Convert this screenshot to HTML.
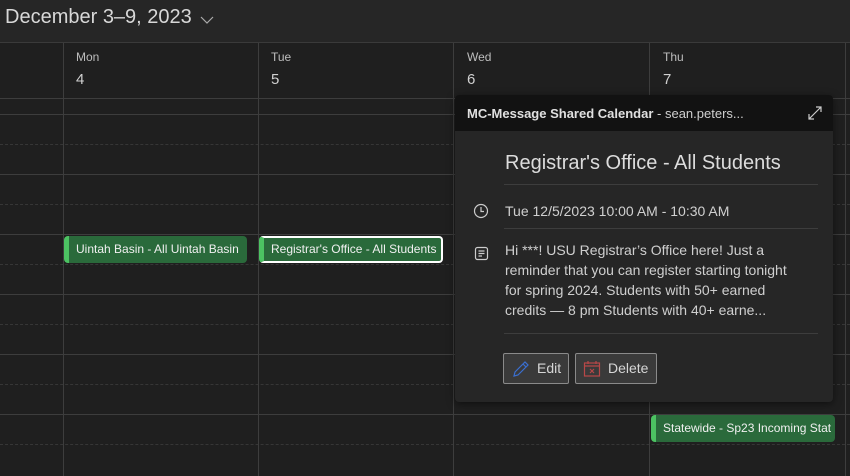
<!DOCTYPE html>
<html><head><style>
*{margin:0;padding:0;box-sizing:border-box}
body{width:850px;height:476px;overflow:hidden;background:#1f1f1f;font-family:"Segoe UI","Liberation Sans",sans-serif;color:#d6d6d6;position:relative}
.abs{position:absolute}
.top{left:0;top:0;width:850px;height:43px;background:#262626;border-bottom:1px solid #3a3a3a}
.vl{top:43px;bottom:0;width:1px;background:#3d3d3d}
.hl{left:0;width:850px;height:1px;background:#3d3d3d}
.dl{left:0;width:850px;height:0;border-top:1px dashed #363636}
.day{font-size:12px;color:#bdbdbd}
.num{font-size:15px;color:#d0d0d0}
.ev{height:27px;background:#2a6a3b;border-radius:4px;border-left:5px solid #4cc262;color:#f0f0f0;font-size:12px;line-height:27px;padding-left:7px;white-space:nowrap;overflow:hidden}
</style></head><body>
<div class="abs top"></div>
<div class="abs" style="left:5px;top:6px;font-size:20px;color:#d8d8d8">December 3–9, 2023</div>
<svg class="abs" style="left:200px;top:15px" width="14" height="10"><path d="M1 2 L7 8 L13 2" fill="none" stroke="#aaa" stroke-width="1.2"/></svg>
<div class="abs hl" style="top:98px"></div>
<div class="abs hl" style="top:114px"></div>
<div class="abs hl" style="top:174px"></div>
<div class="abs hl" style="top:234px"></div>
<div class="abs hl" style="top:294px"></div>
<div class="abs hl" style="top:354px"></div>
<div class="abs hl" style="top:414px"></div>
<div class="abs dl" style="top:144px"></div>
<div class="abs dl" style="top:204px"></div>
<div class="abs dl" style="top:264px"></div>
<div class="abs dl" style="top:324px"></div>
<div class="abs dl" style="top:384px"></div>
<div class="abs dl" style="top:444px"></div>
<div class="abs vl" style="left:63px"></div>
<div class="abs vl" style="left:258px"></div>
<div class="abs vl" style="left:453px"></div>
<div class="abs vl" style="left:649px"></div>
<div class="abs vl" style="left:845px"></div>
<div class="abs day" style="left:76px;top:50px">Mon</div><div class="abs num" style="left:76px;top:71px">4</div>
<div class="abs day" style="left:271px;top:50px">Tue</div><div class="abs num" style="left:271px;top:71px">5</div>
<div class="abs day" style="left:467px;top:50px">Wed</div><div class="abs num" style="left:467px;top:71px">6</div>
<div class="abs day" style="left:663px;top:50px">Thu</div><div class="abs num" style="left:663px;top:71px">7</div>
<div class="abs ev" style="left:64px;top:236px;width:183px">Uintah Basin - All Uintah Basin</div>
<div class="abs ev" style="left:259px;top:236px;width:184px;border:2px solid #fff;border-left:5px solid #4cc262;line-height:23px;padding-left:7px">Registrar's Office - All Students</div>
<div class="abs ev" style="left:651px;top:415px;width:184px">Statewide - Sp23 Incoming Stat</div>
<div class="abs" style="left:455px;top:95px;width:378px;height:307px;background:#262626;border-radius:4px;overflow:hidden;box-shadow:0 2px 8px rgba(0,0,0,.5)">
 <div style="height:36px;background:#121212;padding:11px 0 0 12px;font-size:13px;color:#e0e0e0"><b>MC-Message Shared Calendar</b> <span style="color:#cfcfcf">- sean.peters...</span></div>
 <svg class="abs" style="left:352px;top:10px" width="16" height="16"><path d="M2 14 L14 2 M9 2 H14 V7 M2 9 V14 H7" fill="none" stroke="#ccc" stroke-width="1.2"/></svg>
 <div class="abs" style="left:50px;top:57px;font-size:20px;color:#dcdcdc">Registrar's Office - All Students</div>
 <div class="abs" style="left:49px;top:89px;width:314px;height:1px;background:#3d3d3d"></div>
 <svg class="abs" style="left:18px;top:108px" width="16" height="16"><circle cx="8" cy="8" r="6.5" fill="none" stroke="#ccc" stroke-width="1.2"/><path d="M8 4 V8.5 H11" fill="none" stroke="#ccc" stroke-width="1.2"/></svg>
 <div class="abs" style="left:50px;top:108px;font-size:14px;color:#d0d0d0">Tue 12/5/2023 10:00 AM - 10:30 AM</div>
 <div class="abs" style="left:49px;top:133px;width:314px;height:1px;background:#3d3d3d"></div>
 <svg class="abs" style="left:19px;top:151px" width="16" height="16"><rect x="1.5" y="1.5" width="12" height="12" rx="2" fill="none" stroke="#ccc" stroke-width="1.2"/><path d="M4.5 5 H10.5 M4.5 7.5 H10.5 M4.5 10 H8" stroke="#ccc" stroke-width="1.2"/></svg>
 <div class="abs" style="left:50px;top:145px;width:300px;font-size:14px;line-height:20px;color:#cfcfcf">Hi ***! USU Registrar’s Office here! Just a reminder that you can register starting tonight for spring 2024. Students with 50+ earned credits — 8 pm Students with 40+ earne...</div>
 <div class="abs" style="left:49px;top:238px;width:314px;height:1px;background:#3d3d3d"></div>
 <div class="abs" style="left:48px;top:258px;width:66px;height:31px;border:1px solid #8a8a8a;border-radius:2px;background:#3a3a3a;font-size:14px;line-height:29px;padding-left:33px;color:#d6d6d6">Edit</div>
 <svg class="abs" style="left:57px;top:265px" width="18" height="18"><path d="M2 16 L3 12 L13 2 L16 5 L6 15 Z M11 4 L14 7" fill="none" stroke="#3a6fd0" stroke-width="1.2"/></svg>
 <div class="abs" style="left:120px;top:258px;width:82px;height:31px;border:1px solid #8a8a8a;border-radius:2px;background:#3a3a3a;font-size:14px;line-height:29px;padding-left:32px;color:#d6d6d6">Delete</div>
 <svg class="abs" style="left:128px;top:265px" width="18" height="18"><rect x="1.5" y="3" width="15" height="13" fill="none" stroke="#b84848" stroke-width="1.2"/><path d="M1.5 6 H16.5 M5 1 V4 M13 1 V4 M7 9 L11 13 M11 9 L7 13" stroke="#b84848" stroke-width="1.2"/></svg>
</div>
</body></html>
